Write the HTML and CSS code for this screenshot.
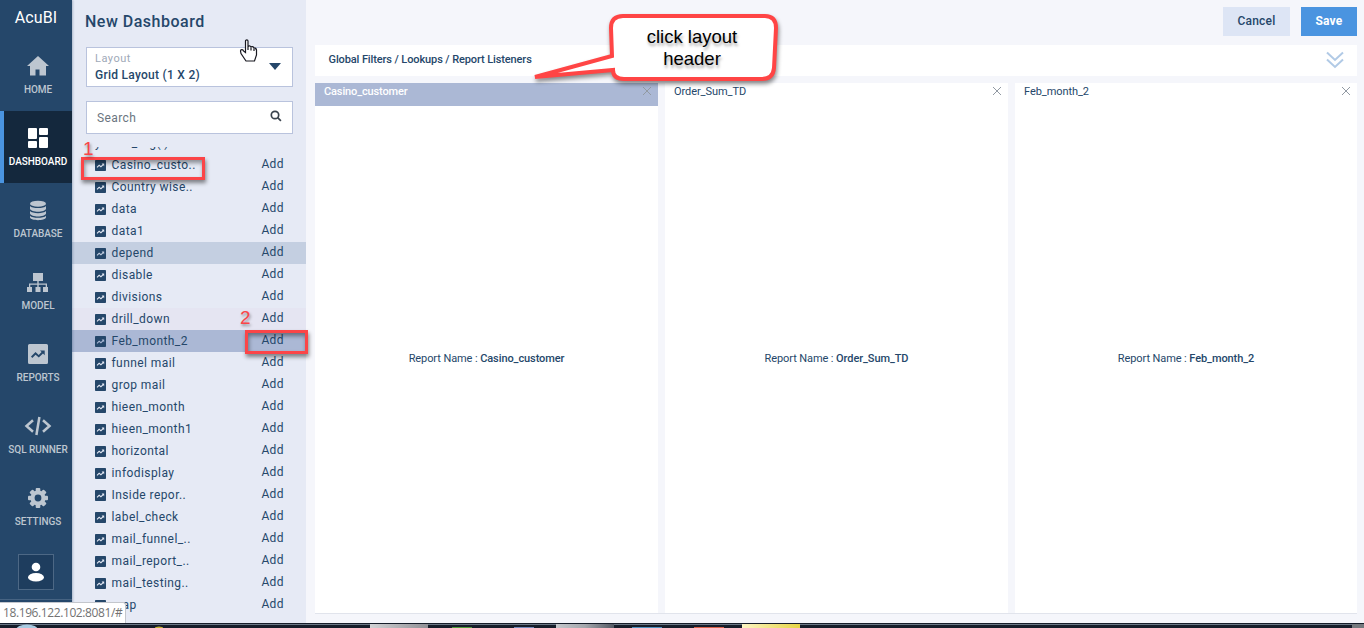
FILE: index.html
```html
<!DOCTYPE html>
<html lang="en">
<head>
<meta charset="utf-8">
<title>AcuBI - New Dashboard</title>
<link rel="stylesheet" href="styles.css">
</head>
<body>
<svg class="defs" width="0" height="0">
  <symbol id="trend" viewBox="0 0 20 20"><path fill-rule="evenodd" d="M1.500 0h17A1.500 1.500 0 0 1 20 1.500v17a1.500 1.500 0 0 1-1.500 1.500h-17A1.500 1.500 0 0 1 0 18.500v-17A1.500 1.500 0 0 1 1.500 0zM12 6.500l1.600 1.600-2.900 2.900-3.200-2.900L3 12.600l1.300 1.300 3.300-3.200 3.200 2.900 4.200-4.100 1.700 1.700V6.500z"/></symbol>
  <symbol id="close" viewBox="0 0 10 10"><path d="M1 1l8 8M9 1l-8 8" fill="none" stroke="currentColor" stroke-width="1"/></symbol>
</svg>
<div class="app">
  <nav class="sidebar">
    <div class="brand">AcuBI</div>
    <a class="nav"><svg width="24" height="24" viewBox="0 0 24 24"><path d="M12 2L1 12h3v9.500h5.500v-6h4v6H20V12h3z"/></svg><span>HOME</span></a>
    <a class="nav active"><svg width="24" height="24" viewBox="0 0 24 24"><rect x="2" y="2" width="9" height="11" rx="1"/><rect x="13" y="2" width="9" height="7" rx="1"/><rect x="2" y="15" width="9" height="7" rx="1"/><rect x="13" y="11" width="9" height="11" rx="1"/></svg><span>DASHBOARD</span></a>
    <a class="nav"><svg width="24" height="24" viewBox="0 -.7 24 24"><ellipse cx="12" cy="5" rx="8" ry="3"/><path d="M4 7.200c2 2.800 14 2.800 16 0v2.900c-1 4-15 4-16 0zM4 12.400c2 2.800 14 2.800 16 0v2.400c-1 4-15 4-16 0zM4 17c2 2.800 14 2.800 16 0v1.800c-1 3.500-15 3.500-16 0z"/></svg><span>DATABASE</span></a>
    <a class="nav"><svg width="24" height="24" viewBox="0 -1 24 24"><path d="M7 2h10v8h-4.300v2.500H21V16h1v5h-5v-5h2.700v-2.200h-7V16h1.800v5h-5v-5h1.800v-2.200h-7V16H6v5H1v-5h2v-3.500h8.300V10H7z"/></svg><span>MODEL</span></a>
    <a class="nav"><svg class="report" width="20" height="20"><use href="#trend"/></svg><span>REPORTS</span></a>
    <a class="nav"><svg width="28" height="24" viewBox="0 0 28 24"><path d="M9 6.200L2.500 12 9 17.800M19 6.200l6.500 5.800-6.500 5.800M15.400 3l-3 18" fill="none" stroke="currentColor" stroke-width="2.500"/></svg><span>SQL RUNNER</span></a>
    <a class="nav"><svg width="24" height="24" viewBox="0 0 24 24"><g><rect id="tooth" x="9.700" y="2" width="4.600" height="20" rx="1"/><use href="#tooth" transform="rotate(45 12 12)"/><use href="#tooth" transform="rotate(90 12 12)"/><use href="#tooth" transform="rotate(135 12 12)"/><circle cx="12" cy="12" r="7.500"/></g><circle class="hub" cx="12" cy="12" r="3.400"/></svg><span>SETTINGS</span></a>
    <div class="user"><svg width="18" height="20" viewBox="0 0 18 20"><circle cx="9" cy="5" r="4.300"/><ellipse cx="9" cy="15.300" rx="8" ry="4.300"/></svg></div>
    <div class="nav-end"></div>
  </nav>

  <aside class="panel">
    <h1>New Dashboard</h1>
    <div class="select"><div><small>Layout</small><b>Grid Layout (1 X 2)</b></div><i class="caret"></i></div>
    <div class="search"><span>Search</span><svg width="12" height="12" viewBox="0 0 12 12"><circle cx="5" cy="5" r="3.700"/><path d="M7.700 7.700l3.200 3.200"/></svg></div>
    <div class="list">
      <div class="row clipped"><span>y casu_org( )</span></div>
      <div class="row"><svg><use href="#trend"/></svg><span>Casino_custo..</span><a>Add</a></div>
      <div class="row"><svg><use href="#trend"/></svg><span>Country wise..</span><a>Add</a></div>
      <div class="row"><svg><use href="#trend"/></svg><span>data</span><a>Add</a></div>
      <div class="row"><svg><use href="#trend"/></svg><span>data1</span><a>Add</a></div>
      <div class="row hover"><svg><use href="#trend"/></svg><span>depend</span><a>Add</a></div>
      <div class="row"><svg><use href="#trend"/></svg><span>disable</span><a>Add</a></div>
      <div class="row"><svg><use href="#trend"/></svg><span>divisions</span><a>Add</a></div>
      <div class="row tint"><svg><use href="#trend"/></svg><span>drill_down</span><a>Add</a></div>
      <div class="row selected"><svg><use href="#trend"/></svg><span>Feb_month_2</span><a>Add</a></div>
      <div class="row"><svg><use href="#trend"/></svg><span>funnel mail</span><a>Add</a></div>
      <div class="row"><svg><use href="#trend"/></svg><span>grop mail</span><a>Add</a></div>
      <div class="row"><svg><use href="#trend"/></svg><span>hieen_month</span><a>Add</a></div>
      <div class="row"><svg><use href="#trend"/></svg><span>hieen_month1</span><a>Add</a></div>
      <div class="row"><svg><use href="#trend"/></svg><span>horizontal</span><a>Add</a></div>
      <div class="row"><svg><use href="#trend"/></svg><span>infodisplay</span><a>Add</a></div>
      <div class="row"><svg><use href="#trend"/></svg><span>Inside repor..</span><a>Add</a></div>
      <div class="row"><svg><use href="#trend"/></svg><span>label_check</span><a>Add</a></div>
      <div class="row"><svg><use href="#trend"/></svg><span>mail_funnel_..</span><a>Add</a></div>
      <div class="row"><svg><use href="#trend"/></svg><span>mail_report_..</span><a>Add</a></div>
      <div class="row"><svg><use href="#trend"/></svg><span>mail_testing..</span><a>Add</a></div>
      <div class="row"><svg><use href="#trend"/></svg><span>map</span><a>Add</a></div>
    </div>
  </aside>

  <main class="main">
    <header class="actions"><button class="cancel">Cancel</button><button class="save">Save</button></header>
    <div class="filters"><b>Global Filters / Lookups / Report Listeners</b><svg width="18" height="18" viewBox="0 0 18 18"><path d="M1 1.500l8 7.500 8-7.500M1 8.500L9 16l8-7.500"/></svg></div>
    <div class="grid">
      <section class="card"><div class="card-head on"><span>Casino_customer</span><svg><use href="#close"/></svg></div><p>Report Name : <b>Casino_customer</b></p></section>
      <section class="card"><div class="card-head"><span>Order_Sum_TD</span><svg><use href="#close"/></svg></div><p>Report Name : <b>Order_Sum_TD</b></p></section>
      <section class="card"><div class="card-head"><span>Feb_month_2</span><svg><use href="#close"/></svg></div><p>Report Name : <b>Feb_month_2</b></p></section>
    </div>
  </main>
</div>

<svg class="taskbar" width="1364" height="5" viewBox="0 0 1364 5">
  <defs>
    <linearGradient id="g1"><stop offset="0" stop-color="#d2d2d5"/><stop offset="1" stop-color="#909096"/></linearGradient>
    <linearGradient id="g2"><stop offset="0" stop-color="#c5c7cc"/><stop offset=".5" stop-color="#a4a7ad"/><stop offset="1" stop-color="#535964"/></linearGradient>
    <linearGradient id="g3"><stop offset="0" stop-color="#fcf4c4"/><stop offset="1" stop-color="#e6d545"/></linearGradient>
  </defs>
  <rect width="1364" height="5" fill="#161d2a"/>
  <rect y="1" width="1364" height="1" fill="#6c7886"/>
  <ellipse cx="27" cy="7" rx="11" ry="5.500" fill="#a9cbe2"/>
  <ellipse cx="159" cy="5" rx="4" ry="1.500" fill="#c4b02f"/>
  <rect x="370" y="1" width="58" height="4" fill="url(#g1)"/>
  <rect x="452" y="4" width="20" height="1" fill="#4e9b37"/>
  <rect x="514" y="4" width="20" height="1" fill="#7288bb"/>
  <rect x="556" y="1" width="58" height="4" fill="url(#g2)"/>
  <rect x="632" y="4" width="30" height="1" fill="#4d8fbf"/>
  <rect x="694" y="4" width="30" height="1" fill="#d75f48"/>
  <rect x="742" y="1" width="58" height="4" fill="url(#g3)"/>
  <rect x="1352" y="1" width="12" height="4" fill="#75797e"/>
</svg>
<div class="status">18.196.122.102:8081/#</div>

<div class="mark mark-one"></div>
<div class="mark mark-two"></div>
<div class="num num-one">1</div>
<div class="num num-two">2</div>
<div class="callout">
  <svg width="260" height="90" viewBox="0 0 260 90"><path d="M93 8H235Q246 8 246 20L244 60Q243 71 232 71H94Q83 71 83 62L5 69 82 48 81 20Q81 8 93 8Z" fill="#fff" stroke="#ff4545" stroke-width="4"/></svg>
  <p>click layout<br>header</p>
</div>
<svg class="cursor" width="19" height="24" viewBox="0 0 19 24"><path d="M6.500 2C6.500.5 9 .5 9 2V8C9 6.500 12 6.500 12 8.500 12 7 15 7.500 15 9.500 15 8.500 17.500 9 17.500 11V16L15.500 22H7L2 14.500 1.500 12C1.500 10.500 4 10 4.500 12L6.500 13.500Z" fill="#fff" stroke="#181820" stroke-width="1.200"/><path d="M9 8v3M12 8.500v3M15 9.500v2.500" stroke="#181820" stroke-width="1.200"/></svg>
</body>
</html>
```
FILE: styles.css
```css
* { box-sizing: border-box; }
body { margin: 0; width: 1364px; height: 628px; overflow: hidden; font-family: Roboto, "Liberation Sans", sans-serif; color: #25476a; background: #f5f6fb; }
.defs { position: absolute; }
.app { display: flex; height: 623px; }

.sidebar { width: 72px; flex: none; background: #25476a; display: flex; flex-direction: column; align-items: center; box-shadow: 1px 0 2px rgba(37,71,106,.3); z-index: 1; }
.brand { height: 39px; line-height: 36px; font-size: 16px; font-weight: 400; letter-spacing: .1px; color: #fff; }
.nav { width: 72px; height: 72px; flex: none; padding: 15px 0 0 4px; display: flex; flex-direction: column; align-items: center; color: #bdc6d0; border-left: 0 solid #4a94e0; }
.nav svg { fill: currentColor; flex: none; }
.nav .hub { fill: #25476a; }
.nav .report { margin: 2px 0; }
.nav span { font-size: 10px; line-height: 12px; font-weight: 500; margin-top: 6px; white-space: nowrap; letter-spacing: -.05px; }
.nav.active { background: #14283d; color: #fff; border-left-width: 4px; padding-left: 0; }
.user { width: 36px; height: 36px; flex: none; margin-top: 11px; border: 1px solid #4d6885; background: #1e3d5e; display: flex; align-items: center; justify-content: center; }
.user svg { fill: #fff; }
.nav-end { width: 72px; margin-top: 9px; border-top: 1px solid #466382; }

.panel { width: 234px; flex: none; background: #e6eaf5; display: flex; flex-direction: column; }
h1 { margin: 11px 0 0 13px; font-size: 16px; line-height: 21px; font-weight: 500; letter-spacing: .5px; }
.select, .search { width: 207px; margin-left: 14px; background: #fff; border: 1px solid #b9c3dd; display: flex; align-items: center; justify-content: space-between; }
.select { height: 40px; margin-top: 15px; padding: 0 11px 0 8px; }
.select small, .select b { display: block; white-space: nowrap; }
.select small { font-size: 11px; line-height: 16px; letter-spacing: .5px; color: #a0a9b8; margin-top: 1px; }
.select b { font-size: 12px; line-height: 17px; font-weight: 500; letter-spacing: .27px; }
.caret { border: 6px solid transparent; border-top: 7px solid #25476a; border-bottom: 0; margin-top: -2px; }
.search { height: 33px; margin-top: 14px; padding: 0 10px 0 10px; font-size: 12px; letter-spacing: .4px; color: #6b7580; }
.search svg { fill: none; stroke: #39424c; stroke-width: 1.700; margin-top: -4px; }
.list { flex: 1; margin-top: 13px; overflow: hidden; font-size: 12px; letter-spacing: .42px; }
.row { height: 22px; display: flex; align-items: center; padding: 0 22px 0 23px; }
.row svg { width: 11px; height: 11px; fill: #25476a; margin: 1px 5.500px 0 0; flex: none; }
.row svg + span { flex: 1; }
.row a { line-height: 14px; margin-top: -2px; }
.row.clipped { margin-top: -15px; }
.row.hover { background: #c4cfe1; }
.row.tint { background: #e5e5f2; }
.row.selected { background: #abb8d5; }

.main { flex: 1; display: flex; flex-direction: column; padding: 7px 7px 9px 9px; }
.actions { display: flex; justify-content: flex-end; gap: 11px; height: 38px; }
button { height: 29px; border: 0; padding: 0 0 1px; font: 500 12px Roboto, sans-serif; letter-spacing: .2px; color: #25476a; }
.cancel { width: 67px; background: #dde5f5; }
.save { width: 56px; background: #4a94e0; color: #fff; font-weight: 700; }
.filters { height: 31px; flex: none; background: #fff; display: flex; align-items: center; justify-content: space-between; padding: 0 13px 2px 13.500px; font-size: 11px; }
.filters b { font-weight: 500; letter-spacing: -.11px; }
.filters svg { fill: none; stroke: #b1cae6; stroke-width: 2; margin-top: 1px; }
.grid { flex: 1; margin-top: 7px; display: grid; grid-template-columns: 343px 343px 342px; column-gap: 7px; border-bottom: 1px solid #e1e4ec; }
.card { background: #fff; display: flex; flex-direction: column; font-size: 11px; }
.card-head { height: 23px; display: flex; justify-content: space-between; padding: 1px 6px 0 9px; line-height: 15px; letter-spacing: -.07px; }
.card-head svg { width: 10px; height: 10px; margin-top: 2px; color: #929aa3; }
.card-head.on { background: #abb8d5; color: #fff; font-weight: 500; letter-spacing: -.13px; }
.card p { margin: 0; padding-bottom: 3px; flex: 1; display: flex; align-items: center; justify-content: center; white-space: pre; letter-spacing: -.09px; }
.card b { font-weight: 500; }

.taskbar { display: block; }
.status { position: absolute; z-index: 3; left: 0; top: 602px; width: 126px; height: 21px; padding-left: 3px; background: #fff; border: 1px solid #c3c6cc; border-width: 1px 1px 0 0; border-radius: 0 3px 0 0; font: 12px/20px "Open Sans", sans-serif; letter-spacing: -.4px; color: #727272; white-space: nowrap; }
.mark { position: absolute; z-index: 4; border: 3px solid #fb4548; box-shadow: 1px 3px 4px rgba(0,0,0,.45), inset 1px 3px 4px rgba(0,0,0,.4); }
.mark-one { left: 81px; top: 157px; width: 124px; height: 23px; }
.mark-two { left: 245px; top: 330px; width: 63px; height: 24px; }
.num { position: absolute; z-index: 4; font: 19px/20px "Liberation Sans", sans-serif; color: #fb4548; text-shadow: 1px 2px 3px rgba(0,0,0,.4); }
.num-one { left: 83px; top: 139px; }
.num-two { left: 240px; top: 308px; }
.callout { position: absolute; left: 530px; top: 8px; width: 260px; height: 90px; z-index: 4; }
.callout svg { display: block; filter: drop-shadow(1px 3px 2px rgba(0,0,0,.45)); }
.callout p { position: absolute; left: 82px; top: 18px; width: 160px; margin: 0; text-align: center; font: 18.500px/22px "Liberation Sans", sans-serif; color: #000; text-shadow: 1px 3px 3px rgba(0,0,0,.35); }
.cursor { position: absolute; z-index: 4; left: 239px; top: 39px; }
```
